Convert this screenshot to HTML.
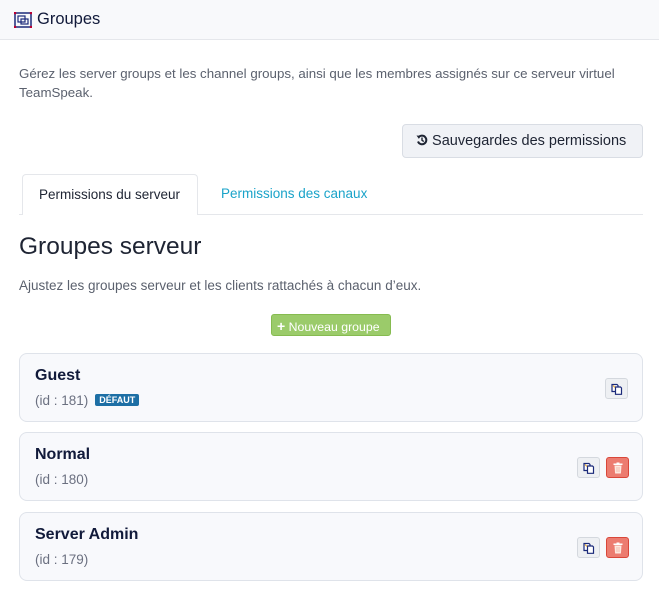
<!DOCTYPE html>
<html><head><meta charset="utf-8"><style>
*{box-sizing:border-box;margin:0;padding:0}
body{width:659px;height:593px;background:#fff;font-family:"Liberation Sans",sans-serif;color:#1e2433;position:relative;overflow:hidden}
.hdr{position:absolute;left:0;top:0;width:659px;height:40px;background:#f8f9fb;border-bottom:1px solid #e5e7eb}
.hdr span{position:absolute;left:37px;top:10px;font-size:16.5px;color:#111a3a}
.desc{position:absolute;left:19px;top:64px;width:630px;font-size:13.3px;line-height:19px;color:#5b616e}
.sbtn{position:absolute;left:402px;top:124px;width:241px;height:34px;background:#f0f2f6;border:1px solid #d9dde4;border-radius:4px;font-size:14.5px;color:#1e2433;padding:8px 0 0 13px}
.tabline{position:absolute;left:19px;top:214px;width:624px;height:1px;background:#e5e7eb}
.tab1{position:absolute;left:22px;top:174px;width:176px;height:41px;background:#fff;border:1px solid #e5e7eb;border-bottom:none;border-radius:4px 4px 0 0;font-size:13.5px;padding:12px 0 0 16px}
.tab2{position:absolute;left:221px;top:186px;font-size:13.5px;color:#1aa3c9}
h1{position:absolute;left:19px;top:233px;font-size:24.5px;font-weight:normal;color:#1e2433}
.sub{position:absolute;left:19px;top:278px;font-size:13.5px;color:#5b616e}
.nbtn{position:absolute;left:271px;top:314px;width:120px;height:22px;background:#9bcb6a;border:1px solid #86bb50;border-radius:3px;color:#fff;font-size:12.3px;padding:3px 0 0 5px;white-space:nowrap}
.card{position:absolute;left:19px;width:624px;height:69px;background:#f8f9fc;border:1px solid #dfe3ea;border-radius:8px}
.card b{position:absolute;left:15px;top:13px;font-size:16px;color:#111a3a}
.card .id{position:absolute;left:15px;top:39px;font-size:13.5px;color:#6b7080}
.badge{display:inline-block;background:#1d6fa5;color:#fff;font-size:9px;font-weight:bold;padding:1px 4px;border-radius:2px;margin-left:7px;vertical-align:2px}
.ib{position:absolute;top:24px;width:23px;height:21px;border:1px solid #d4d8de;background:#eef0f3;border-radius:3px}
.ib svg{position:absolute;left:5px;top:4px}
.del{background:#ec7c70;border-color:#d9473a}
</style></head><body>
<div class="hdr">
<svg style="position:absolute;left:14px;top:12px" width="18" height="16" viewBox="0 0 18 16"><rect x="1" y="1" width="16" height="14" fill="none" stroke="#1b2a7a" stroke-width="1.5"/><rect x="4" y="4" width="7" height="6" fill="none" stroke="#1b2a7a" stroke-width="1.2"/><rect x="7" y="7" width="7" height="5" fill="none" stroke="#1b2a7a" stroke-width="1.2"/><circle cx="1" cy="1" r="1.3" fill="#b03"/><circle cx="17" cy="1" r="1.3" fill="#b03"/><circle cx="1" cy="15" r="1.3" fill="#b03"/><circle cx="17" cy="15" r="1.3" fill="#b03"/></svg>
<span>Groupes</span></div>
<div class="desc">Gérez les server groups et les channel groups, ainsi que les membres assignés sur ce serveur virtuel TeamSpeak.</div>
<div class="sbtn"><svg width="12" height="12" viewBox="0 0 12 12" style="vertical-align:-1px"><path d="M2.5 3.5A4.3 4.3 0 1 1 2 7.5" fill="none" stroke="#1e2433" stroke-width="2"/><path d="M0.5 1.5L3.8 1.8 3 5z" fill="#1e2433"/><path d="M6 3.5V6.3L7.8 7.5" fill="none" stroke="#1e2433" stroke-width="1.4"/></svg> Sauvegardes des permissions</div>
<div class="tabline"></div>
<div class="tab1">Permissions du serveur</div>
<div class="tab2">Permissions des canaux</div>
<h1>Groupes serveur</h1>
<div class="sub">Ajustez les groupes serveur et les clients rattachés à chacun d’eux.</div>
<div class="nbtn"><b style="font-size:14px">+</b> Nouveau groupe</div>
<svg width="0" height="0" style="position:absolute"><defs>
<symbol id="cp" viewBox="0 0 12 12"><path d="M1 1.5h5l1 1v6H1z" fill="#fff" stroke="#1b2a7a" stroke-width="1.2"/><path d="M4.5 4h5l1 1v6.3h-6z" fill="#fff" stroke="#1b2a7a" stroke-width="1.2"/><path d="M2 2.5l2 2" stroke="#e8a020" stroke-width="1"/></symbol>
<symbol id="tr" viewBox="0 0 12 12"><rect x="1.5" y="1.5" width="9" height="1.5" fill="#fff"/><rect x="4.5" y="0.5" width="3" height="1.5" fill="#fff"/><path d="M2.5 3.5h7l-0.6 8h-5.8z" fill="#fde8e0"/><path d="M5 5v5M7 5v5" stroke="#f3b7a8" stroke-width="0.9"/></symbol></defs></svg>
<div class="card" style="top:353px"><b>Guest</b><div class="id">(id : 181)<span class="badge">DÉFAUT</span></div><div class="ib" style="left:585px"><svg width="12" height="12"><use href="#cp"/></svg></div></div>
<div class="card" style="top:432px"><b>Normal</b><div class="id">(id : 180)</div><div class="ib" style="left:557px"><svg width="12" height="12"><use href="#cp"/></svg></div><div class="ib del" style="left:586px"><svg width="12" height="12"><use href="#tr"/></svg></div></div>
<div class="card" style="top:512px"><b>Server Admin</b><div class="id">(id : 179)</div><div class="ib" style="left:557px"><svg width="12" height="12"><use href="#cp"/></svg></div><div class="ib del" style="left:586px"><svg width="12" height="12"><use href="#tr"/></svg></div></div>
</body></html>
